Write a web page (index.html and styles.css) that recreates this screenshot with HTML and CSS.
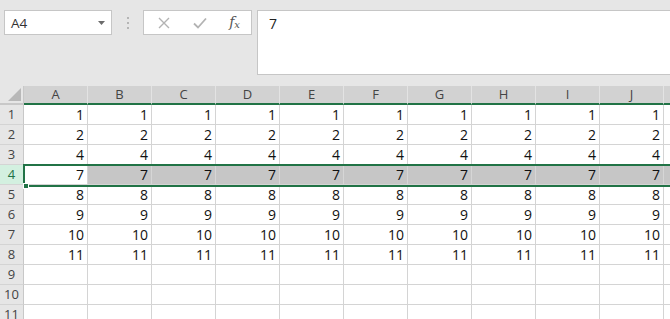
FILE: index.html
```html
<!DOCTYPE html>
<html lang="en">

<head>
    <meta charset="UTF-8">
    <title>Sheet</title>
    <link rel="stylesheet" href="styles.css">
</head>

<body>
    <!-- Formula bar -->
    <div class="toolbar">
        <div class="name-box">
            <span>A4</span>
            <svg class="caret" width="7" height="4" viewBox="0 0 7 4"><path d="M0 0h7L3.5 4z" fill="#6b6b6b"/></svg>
        </div>
        <div class="grip"><i></i><i></i><i></i></div>
        <div class="buttons">
            <svg width="12" height="12" viewBox="0 0 12 12"><path d="M1 1L11 11M11 1L1 11" stroke="#b3b3b3" stroke-width="1.4" fill="none"/></svg>
            <svg width="14" height="12" viewBox="0 0 14 12"><path d="M1 6.5L5 10.5L13 1.5" stroke="#b3b3b3" stroke-width="1.8" fill="none"/></svg>
            <span class="fx">f<sub>x</sub></span>
        </div>
        <div class="formula">7</div>
    </div>

    <!-- Grid -->
    <div class="sheet-wrap">
        <div class="sheet" id="sheet"></div>
        <div class="selection"><span class="handle"></span></div>
    </div>

    <script>
        var cols = ['A', 'B', 'C', 'D', 'E', 'F', 'G', 'H', 'I', 'J', 'K'];
        var values = [1, 2, 4, 7, 8, 9, 10, 11];
        var sheet = document.getElementById('sheet');
        var html = '<div class="corner"></div>';

        cols.forEach(function (c) {
            html += '<div class="col-head">' + (c === 'K' ? '' : c) + '</div>';
        });

        for (var r = 1; r <= 11; r++) {
            var sel = r === 4 ? ' selected' : '';
            html += '<div class="row-head' + sel + '">' + r + '</div>';
            for (var i = 0; i < cols.length; i++) {
                var v = (r <= 8 && i < 10) ? values[r - 1] : '';
                var cls = 'cell';
                if (r === 4 && i > 0) cls += ' shaded';
                html += '<div class="' + cls + '">' + v + '</div>';
            }
        }
        sheet.innerHTML = html;
    </script>
</body>

</html>
```

FILE: styles.css
```css
body {
    margin: 0;
    width: 670px;
    height: 319px;
    overflow: hidden;
    background-color: #e6e6e6;
    font-family: "Open Sans", Arial, sans-serif;
    color: #222;
}

.toolbar {
    display: flex;
    align-items: flex-start;
    padding: 10px 0 0 4px;
    height: 76px;
    box-sizing: border-box;
}

.name-box {
    display: flex;
    align-items: center;
    justify-content: space-between;
    width: 108px;
    height: 25px;
    box-sizing: border-box;
    padding: 0 6px 0 6px;
    background-color: #fff;
    border: 1px solid #c6c6c6;
    font-size: 13.5px;
    color: #333;
}

.grip {
    display: flex;
    flex-direction: column;
    gap: 3px;
    margin: 7px 14px 0 15px;
}

.grip i {
    display: block;
    width: 2px;
    height: 2px;
    background-color: #b5b5b5;
}

.buttons {
    display: flex;
    align-items: center;
    justify-content: space-between;
    width: 109px;
    height: 25px;
    box-sizing: border-box;
    padding: 0 11px 0 14px;
    background-color: #fff;
    border: 1px solid #c6c6c6;
}

.fx {
    font-family: "DejaVu Serif", serif;
    font-style: italic;
    font-size: 14px;
    color: #555;
    line-height: 1;
}

.fx sub {
    font-size: 10px;
    vertical-align: -1px;
}

.formula {
    flex: 1;
    margin-left: 5px;
    height: 65px;
    box-sizing: border-box;
    padding: 3px 11px;
    background-color: #fff;
    border: 1px solid #c6c6c6;
    border-right: none;
    font-size: 14px;
}

.sheet-wrap {
    position: relative;
    margin-top: 10px;
}

.sheet {
    display: grid;
    grid-template-columns: 24px repeat(11, 64px);
    grid-template-rows: 19px repeat(11, 20px);
    font-size: 14px;
}

.sheet > div {
    box-sizing: border-box;
}

.corner {
    position: relative;
    background-color: #e6e6e6;
    border-right: 1px solid #c8c8c8;
    border-bottom: 2px solid #c8c8c8;
}

.corner::after {
    content: "";
    position: absolute;
    right: 2px;
    bottom: 2px;
    border-style: solid;
    border-width: 0 0 13px 13px;
    border-color: transparent transparent #b8b8b8 transparent;
}

.col-head {
    background-color: #d2d2d2;
    border-right: 1px solid #e3e3e3;
    border-bottom: 2px solid #217346;
    text-align: center;
    font-size: 13px;
    line-height: 17px;
    color: #444;
}

.row-head {
    background-color: #e6e6e6;
    border-right: 1px solid #c8c8c8;
    border-bottom: 1px solid #d4d4d4;
    text-align: center;
    font-size: 13px;
    line-height: 19px;
    color: #444;
}

.row-head.selected {
    background-color: #d3f0e0;
    color: #217346;
}

.cell {
    background-color: #fff;
    border-right: 1px solid #d4d4d4;
    border-bottom: 1px solid #d4d4d4;
    text-align: right;
    padding-right: 3px;
    line-height: 20px;
    color: #111;
}

.cell.shaded {
    background-color: #c6c6c6;
    border-right-color: #d6d6d6;
}

.selection {
    position: absolute;
    left: 23px;
    top: 78px;
    width: 660px;
    height: 23px;
    border: 2px solid #217346;
    box-sizing: border-box;
    pointer-events: none;
}

.handle {
    position: absolute;
    left: -2px;
    bottom: -4px;
    width: 6px;
    height: 6px;
    background-color: #217346;
    border: 1px solid #fff;
    box-sizing: border-box;
}
```
